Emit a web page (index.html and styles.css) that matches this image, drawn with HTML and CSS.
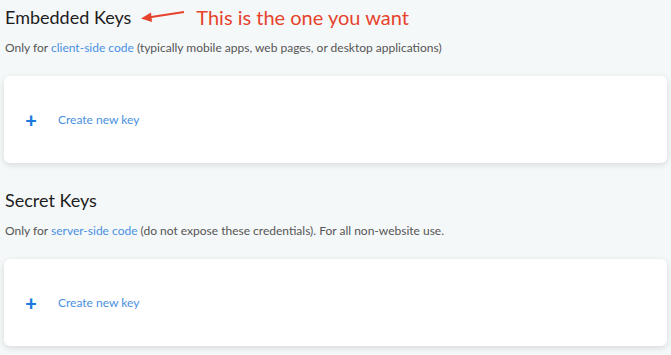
FILE: index.html
```html
<!DOCTYPE html>
<html lang="en">
<head>
  <meta charset="UTF-8" />
  <title>API Keys</title>
  <link rel="stylesheet" href="styles.css">
</head>
<body>
  <section class="key-section">
    <div class="section-head">
      <h2>Embedded Keys</h2>
      <!-- annotation -->
      <svg class="arrow" width="46" height="14" viewBox="0 0 46 14">
        <path d="M44 3 L8 8.5" stroke="#e5432d" stroke-width="2" fill="none"/>
        <path d="M1 9.5 L11 3.5 L12 13 Z" fill="#e5432d"/>
      </svg>
      <span class="note">This is the one you want</span>
    </div>
    <p class="desc">Only for <a href="#">client-side code</a> (typically mobile apps, web pages, or desktop applications)</p>
    <div class="card">
      <button class="create-btn"><span class="plus">+</span>Create new key</button>
    </div>
  </section>

  <section class="key-section">
    <div class="section-head">
      <h2>Secret Keys</h2>
    </div>
    <p class="desc">Only for <a href="#">server-side code</a> (do not expose these credentials). For all non-website use.</p>
    <div class="card">
      <button class="create-btn"><span class="plus">+</span>Create new key</button>
    </div>
  </section>
</body>
</html>
```

FILE: styles.css
```css
body {
  margin: 0;
  padding: 0 4px;
  background: #f5f8f9;
  font-family: Lato, "Noto Sans", sans-serif;
  color: #222;
}

.key-section {
  padding-top: 4px;
  margin-bottom: 20px;
}

.section-head {
  display: flex;
  align-items: center;
  height: 26px;
}

.section-head h2 {
  margin: 0 0 0 1px;
  font-size: 18px;
  font-weight: 400;
  color: #1d1d1d;
}

.arrow {
  margin: 0 10px 2px 9px;
}

.note {
  font-size: 20px;
  color: #e5432d;
}

.desc {
  margin: 10px 0 0 1px;
  font-size: 12px;
  color: #555;
}

.desc a {
  color: #4a90e2;
  text-decoration: none;
}

.card {
  margin-top: 21px;
  height: 87px;
  background: #fff;
  border-radius: 6px;
  box-shadow: 0 2px 6px rgba(0, 0, 0, 0.12);
  display: flex;
  align-items: center;
}

.create-btn {
  border: none;
  background: none;
  padding: 0 0 0 21px;
  display: flex;
  align-items: center;
  font-family: inherit;
  font-size: 12px;
  color: #4a90e2;
  cursor: pointer;
}

.plus {
  width: 12px;
  font-size: 20px;
  font-weight: 900;
  color: #1a7ae0;
  margin-right: 21px;
  line-height: 1;
}
```
